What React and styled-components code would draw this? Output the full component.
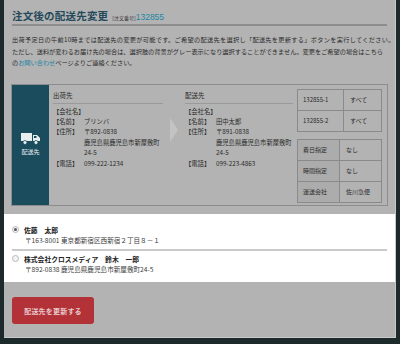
import React from 'react';
import styled, { createGlobalStyle } from 'styled-components';

const GlobalStyle = createGlobalStyle`
  body {
    margin: 0;
    background: #1d2a2c;
    font-family: "Noto Sans CJK JP", "Noto Sans", sans-serif;
  }
`;

const Modal = styled.div`
  box-sizing: border-box;
  width: 392px;
  height: 338px;
  margin-left: 4px;
  background: #b3b3b3;
  border-right: 1px solid #c9c9c9;
  border-bottom: 1px solid #c9c9c9;
  display: flex;
  flex-direction: column;
`;

const Header = styled.div`
  padding: 8px 8px 0;
`;

const TitleRow = styled.div`
  display: flex;
  align-items: baseline;
  border-bottom: 2px solid #8d8d8d;
  padding-bottom: 1px;
`;

const Title = styled.h1`
  margin: 0;
  font-size: 10.5px;
  line-height: 15px;
  font-weight: 700;
  color: #23495a;
  letter-spacing: 0.2px;
`;

const OrderLabel = styled.span`
  margin-left: 4px;
  font-size: 5px;
  color: #333;
`;

const OrderNo = styled.span`
  font-family: "Liberation Sans", Arial, sans-serif;
  font-size: 8.5px;
  color: #2186a6;
`;

const Lead = styled.div`
  margin-top: 8px;
  font-size: 6.2px;
  line-height: 11.5px;
  color: #2a2a2a;
`;

const LeadLine = styled.div`
  white-space: nowrap;
  letter-spacing: ${p => p.$ls || 0}px;
`;

const Link = styled.a`
  color: #1f84a5;
  text-decoration: none;
`;

const InfoBox = styled.div`
  margin: 15px 7px 0;
  height: 124px;
  box-sizing: border-box;
  border: 1px solid #8c8c8c;
  display: flex;
`;

const Side = styled.div`
  width: 37px;
  background: #1a4c5e;
  color: #e8eef0;
  display: flex;
  flex-direction: column;
  align-items: center;
  justify-content: center;
  gap: 2px;
  font-size: 6px;
`;

const Content = styled.div`
  flex: 1;
  display: flex;
  padding: 4px 0 0 4px;
`;

const AddressCol = styled.div`
  width: ${p => p.$w}px;
`;

const ColHead = styled.div`
  font-size: 6.5px;
  line-height: 10px;
  color: #2a2a2a;
  padding: 1px 0 3px;
  border-bottom: 1px solid #9a9a9a;
  margin-bottom: 3px;
`;

const Row = styled.div`
  display: flex;
  font-size: 6.3px;
  line-height: 10.4px;
  color: #2a2a2a;
  white-space: nowrap;
`;

const Key = styled.span`
  width: 31px;
  flex-shrink: 0;
`;

const Arrow = styled.div`
  width: 22px;
  display: flex;
  justify-content: center;
  padding-top: 29px;
  box-sizing: border-box;
`;

const Tables = styled.div`
  margin-left: 4px;
  width: 85px;
  display: flex;
  flex-direction: column;
  gap: 7px;
`;

const Table = styled.div`
  border: 1px solid #8a8a8a;
  display: grid;
  grid-template-columns: ${p => p.$left}px 1fr;
`;

const Cell = styled.div`
  height: 20px;
  display: flex;
  align-items: center;
  padding-left: ${p => (p.$label ? 5 : 6)}px;
  font-size: 6px;
  color: #2a2a2a;
  background: ${p => (p.$shade ? '#acacac' : 'transparent')};
  border-right: ${p => (p.$label ? '1px solid #8a8a8a' : 'none')};
  border-top: ${p => (p.$first ? 'none' : '1px solid #8a8a8a')};
`;

const Choices = styled.div`
  margin-top: 8px;
  background: #fff;
  padding: 11px 8px 8px;
`;

const Choice = styled.div`
  display: flex;
  flex-direction: column;
`;

const NameLine = styled.label`
  display: flex;
  align-items: center;
  gap: 5px;
  font-size: 6.8px;
  line-height: 10px;
  font-weight: 700;
  color: #222;
`;

const Radio = styled.span`
  width: 5px;
  height: 5px;
  border-radius: 50%;
  border: 1px solid #b8b8b8;
  background: #f4f4f4;
  display: flex;
  align-items: center;
  justify-content: center;

  &::after {
    content: '';
    width: 3px;
    height: 3px;
    border-radius: 50%;
    background: ${p => (p.$checked ? '#555' : 'transparent')};
  }
`;

const Addr = styled.div`
  padding-left: 13px;
  font-size: 6.6px;
  line-height: 10px;
  color: #3a3a3a;
`;

const Divider = styled.hr`
  border: none;
  height: 2px;
  background: #cacaca;
  margin: 4px 0 3px;
`;

const Footer = styled.div`
  padding: 13px 8px;
`;

const SubmitButton = styled.button`
  width: 82px;
  height: 27px;
  border: none;
  border-radius: 3px;
  background: #b23238;
  color: #e9c9cb;
  font-family: inherit;
  font-size: 7px;
  font-weight: 700;
  letter-spacing: 0.2px;
  cursor: pointer;
`;

const Truck = () => (
  <svg width="19" height="12" viewBox="0 0 19 12" fill="#e8eef0">
    <rect x="0" y="0" width="11" height="8" />
    <path d="M12 2h4l3 3v3h-7z" />
    <rect x="13" y="3" width="2.5" height="2" fill="#1a4c5e" />
    <circle cx="4" cy="9.5" r="2" stroke="#1a4c5e" strokeWidth="0.8" />
    <circle cx="15" cy="9.5" r="2" stroke="#1a4c5e" strokeWidth="0.8" />
  </svg>
);

const Address = ({ head, name, zip, line1, line2, tel, w }) => (
  <AddressCol $w={w}>
    <ColHead>{head}</ColHead>
    <Row><Key>【会社名】</Key></Row>
    <Row><Key>【名前】</Key>{name}</Row>
    <Row><Key>【住所】</Key>{zip}</Row>
    <Row><Key />{line1}</Row>
    <Row><Key />{line2}</Row>
    <Row><Key>【電話】</Key>{tel}</Row>
  </AddressCol>
);

const items = [
  ['132855-1', 'すべて'],
  ['132855-2', 'すべて'],
];

const options = [
  ['着日指定', 'なし'],
  ['時間指定', 'なし'],
  ['運送会社', '佐川急便'],
];

export default function App() {
  return (
    <>
      <GlobalStyle />
      <Modal>
        <Header>
          <TitleRow>
            <Title>注文後の配送先変更</Title>
            <OrderLabel>[注文番号]</OrderLabel>
            <OrderNo>132855</OrderNo>
          </TitleRow>
          <Lead>
            <LeadLine $ls={0.3}>出荷予定日の午前10時までは配送先の変更が可能です。ご希望の配送先を選択し「配送先を更新する」ボタンを実行してください。</LeadLine>
            <LeadLine>ただし、送料が変わるお届け先の場合は、選択肢の背景がグレー表示になり選択することができません。変更をご希望の場合はこちら</LeadLine>
            <LeadLine>の<Link href="#">お問い合わせ</Link>ページよりご連絡ください。</LeadLine>
          </Lead>
        </Header>

        <InfoBox>
          <Side>
            <Truck />
            <span>配送先</span>
          </Side>
          <Content>
            <Address w={110} head="出荷先" name="ブリンバ" zip="〒892-0838"
                     line1="鹿児島県鹿児島市新屋敷町" line2="24-5" tel="099-222-1234" />
            <Arrow>
              <svg width="8" height="24" viewBox="0 0 8 24">
                <polygon points="0,0 8,12 0,24" fill="#c3c3c3" />
              </svg>
            </Arrow>
            <Address w={108} head="配送先" name="田中太郎" zip="〒891-0838"
                     line1="鹿児島県鹿児島市新屋敷町" line2="24-5" tel="099-223-4863" />
            <Tables>
              <Table $left={46}>
                {items.map(([k, v], i) => (
                  <React.Fragment key={k}>
                    <Cell $label $first={i === 0}>{k}</Cell>
                    <Cell $first={i === 0}>{v}</Cell>
                  </React.Fragment>
                ))}
              </Table>
              <Table $left={42}>
                {options.map(([k, v], i) => (
                  <React.Fragment key={k}>
                    <Cell $label $shade $first={i === 0}>{k}</Cell>
                    <Cell $first={i === 0}>{v}</Cell>
                  </React.Fragment>
                ))}
              </Table>
            </Tables>
          </Content>
        </InfoBox>

        <Choices>
          <Choice>
            <NameLine><Radio $checked />佐藤　太郎</NameLine>
            <Addr>〒163-8001 東京都新宿区西新宿２丁目８－１</Addr>
          </Choice>
          <Divider />
          <Choice>
            <NameLine><Radio />株式会社クロスメディア　鈴木　一郎</NameLine>
            <Addr>〒892-0838 鹿児島県鹿児島市新屋敷町24-5</Addr>
          </Choice>
        </Choices>

        <Footer>
          <SubmitButton>配送先を更新する</SubmitButton>
        </Footer>
      </Modal>
    </>
  );
}
